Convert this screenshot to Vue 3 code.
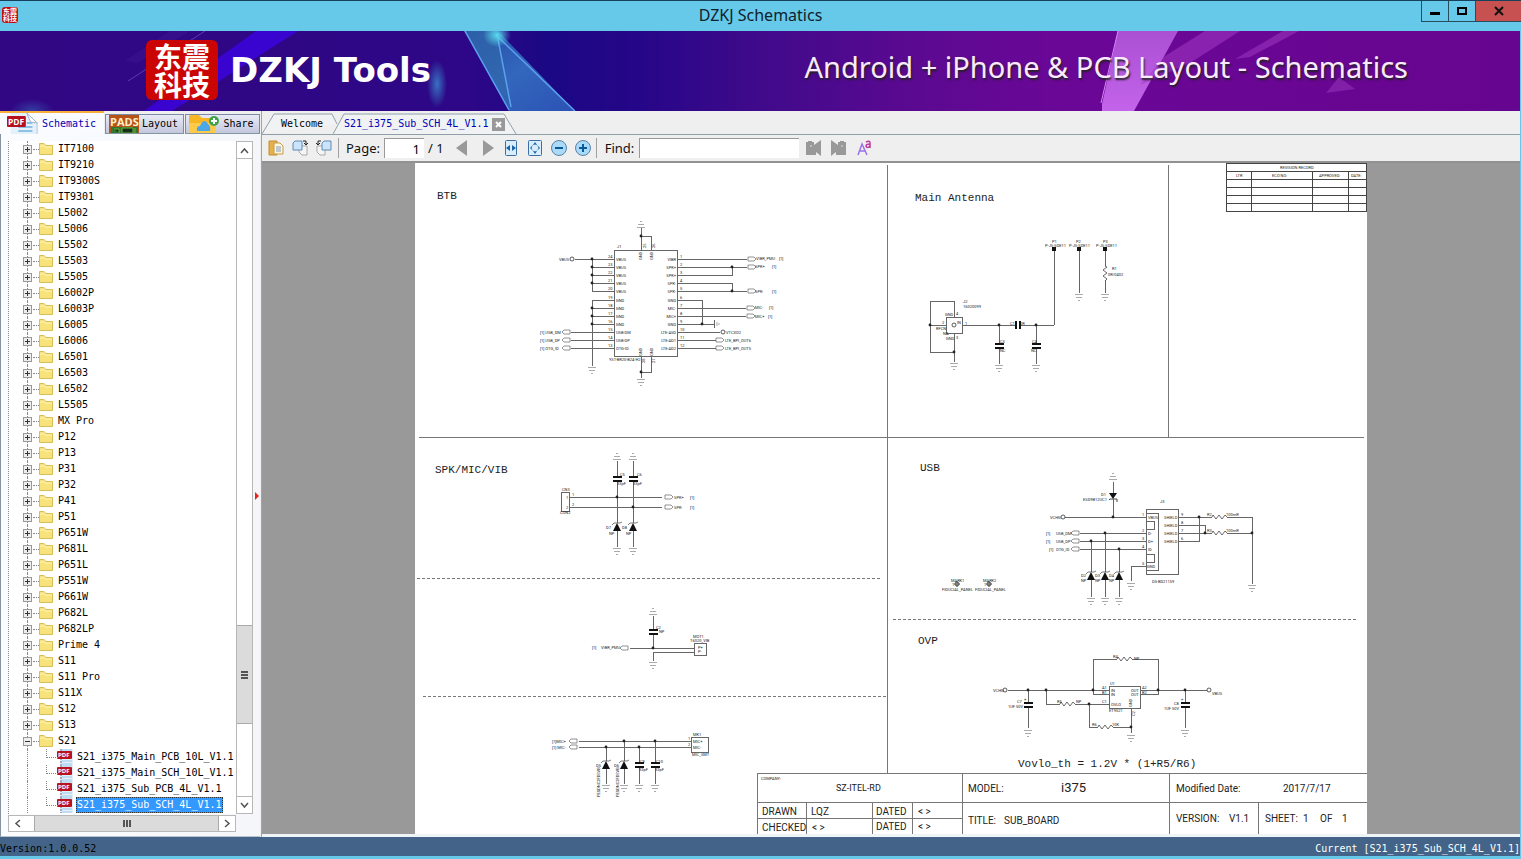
<script setup>
import { ref } from 'vue'

const folders = [
  'IT7100', 'IT9210', 'IT9300S', 'IT9301', 'L5002', 'L5006', 'L5502', 'L5503', 'L5505', 'L6002P', 'L6003P',
  'L6005', 'L6006', 'L6501', 'L6503', 'L6502', 'L5505', 'MX Pro', 'P12', 'P13', 'P31', 'P32', 'P41', 'P51',
  'P651W', 'P681L', 'P651L', 'P551W', 'P661W', 'P682L', 'P682LP', 'Prime 4', 'S11', 'S11 Pro', 'S11X', 'S12',
  'S13', 'S21',
]
const files = ['S21_i375_Main_PCB_10L_V1.1', 'S21_i375_Main_SCH_10L_V1.1', 'S21_i375_Sub_PCB_4L_V1.1', 'S21_i375_Sub_SCH_4L_V1.1']
const selected = ref(files[3])
const page = ref('1')
const find = ref('')

// Connector J1 pins
const pinY = [259, 267, 275, 283, 291, 300, 308, 316, 324, 332, 340, 348]
const leftPins = ['VBUS', 'VBUS', 'VBUS', 'VBUS', 'VBUS', 'GND', 'GND', 'GND', 'GND', 'USB-DM', 'USB-DP', 'OTG-ID']
const rightPins = ['VIBR', 'SPK+', 'SPK+', 'SPK-', 'SPK-', 'GND', 'MIC-', 'MIC+', 'GND', 'LTE-ASD', 'LTE-AD1', 'LTE-AD2']

const wires = [
  // J1
  'M575 259H614M592 259V291M592 267H614M592 275H614M592 283H614M592 291H614',
  'M592 300V366M592 300H614M592 308H614M592 316H614M592 324H614M571 332H614M571 340H614M571 348H614',
  'M677 259H747M677 267H747M677 275H732V267M677 283H732V291M677 291H747M677 300H702V324M677 324H714M714 320V328',
  'M677 308H746M677 316H746M677 332H720M677 340H716M677 348H716',
  'M641 228V250M641 236H651V250M641 356V378M641 372H651V356',
  // antenna
  'M1054 250V325M1079 250V293M1105 250V266M1105 280V293M954 317V301H930V352H954M930 325H946M954 333V362',
  'M962 325H1016M1020 325H1054M999 325V344M999 348V364M1036 325V344M1036 348V364',
  // speaker, vibrator, microphone
  'M569 497H662M569 507H662M617 461V477M617 481V523M617 531V547M633 461V477M633 481V523M633 531V547',
  'M653 616V630M653 634V648M630 648H694M694 652H653V661',
  'M579 741H691M579 747H691M606 747V761M606 769V784M624 741V761M624 769V784M639 747V763M639 767V784M655 741V763M655 767V784',
  // USB
  'M1113 482V493M1113 499V517M1065 517H1146M1080 533H1146M1080 541H1146M1080 549H1146M1105 533V572M1105 580V597M1091 541V572M1091 580V597M1119 549V572M1119 580V597M1146 566H1131V581',
  'M1178 517H1212M1178 525H1205V533M1178 533H1212M1178 541H1199V517M1227 517H1252V584M1227 533H1252',
  // over-voltage protection
  'M1008 690H1109M1028 690V703M1028 707V728M1046 690V704H1060M1075 704H1109M1089 704V727H1098M1113 727H1131',
  'M1109 694H1093V659H1117M1132 659H1158V694H1140M1140 690H1207M1185 690V703M1185 707V728M1131 708V733',
]
const boxes = [
  [614, 250, 63, 106], [946, 317, 16, 16], [561, 492, 8, 19], [694, 643, 12, 12], [691, 737, 17, 15],
  [1146, 509, 32, 65], [1146, 513, 12, 57], [1146, 521, 8, 8], [1146, 554, 8, 8], [1109, 686, 31, 22],
]
const dots = [
  [592, 259], [592, 267], [592, 275], [592, 283], [592, 308], [592, 316], [592, 324], [641, 236], [641, 372],
  [732, 267], [732, 291], [702, 324], [930, 325], [954, 352], [999, 325], [1036, 325], [617, 497], [633, 507],
  [653, 648], [606, 747], [624, 741], [639, 747], [655, 741], [1113, 517], [1105, 533], [1091, 541], [1119, 549],
  [1199, 517], [1205, 533], [1252, 533], [1028, 690], [1046, 690], [1093, 690], [1089, 704], [1131, 727],
  [1158, 690], [1185, 690],
]
const rings = [[572, 259], [723, 332], [954, 325], [1063, 517], [1005, 690], [1209, 690]]
const groundsDown = [
  [592, 366], [641, 378], [1079, 293], [1105, 293], [954, 362], [999, 364], [1036, 364], [617, 547], [633, 547],
  [653, 661], [606, 784], [624, 784], [639, 784], [655, 784], [1091, 597], [1105, 597], [1119, 597], [1131, 582],
  [1252, 584], [1028, 729], [1185, 729], [1131, 734],
]
const groundsUp = [[641, 228], [617, 460], [633, 460], [653, 615], [1113, 480]]
const caps = [[999, 344], [1036, 344], [617, 477], [633, 477], [653, 630], [639, 763], [655, 763], [1028, 703], [1185, 703]]
const diodes = [[617, 523], [633, 523], [606, 761], [624, 761], [1091, 572], [1105, 572], [1119, 572]]
const resistors = [[1212, 517], [1212, 533], [1060, 704], [1098, 727], [1117, 659]]
const portsRight = [[748, 259], [748, 267], [748, 291], [747, 308], [747, 316], [716, 340], [716, 348], [665, 497], [665, 507]]
const portsLeft = [[570, 332], [570, 340], [570, 348], [628, 648], [577, 741], [577, 747], [1079, 533], [1079, 541], [1079, 549]]
const notes = [
  ['VBUS', 559, 261], ['J1', 617, 248], ['YST-BR20-B24-H2', 609, 361],
  ['[1] USB_DM', 540, 334], ['[1] USB_DP', 540, 342], ['[1] OTG_ID', 540, 350],
  ['VIBR_PMU', 756, 260], ['[1]', 779, 260], ['SPK+', 755, 268], ['[1]', 772, 268], ['SPK-', 755, 293], ['[1]', 772, 293],
  ['MIC-', 755, 309], ['[1]', 769, 309], ['MIC+', 755, 318], ['[1]', 768, 318],
  ['VTCXO2', 726, 334], ['LTE_BPI_OUT6', 725, 342], ['LTE_BPI_OUT5', 725, 350],
  ['P1', 1052, 243], ['P-JS-SDE11', 1045, 247], ['P2', 1076, 243], ['P-JS-SDE11', 1069, 247], ['P3', 1103, 243], ['P-JS-SDE11', 1096, 247],
  ['R1', 1112, 270], ['0R/0402', 1108, 276], ['J2', 963, 303], ['16020099', 963, 308], ['GND', 945, 316], ['GND', 946, 340],
  ['4', 956, 315], ['3', 956, 339], ['2', 942, 324], ['RFCN', 936, 330], ['1', 965, 325], ['NA', 943, 335], ['IN', 957, 324],
  ['C1', 1010, 325], ['0R', 1020, 325], ['C3', 1000, 343], ['NC', 1000, 352], ['C4', 1032, 343], ['NC', 1031, 352],
  ['CN3', 562, 491], ['CON2', 560, 514], ['1', 572, 496], ['2', 572, 506], ['1', 566, 499], ['2', 566, 509],
  ['C5', 620, 476], ['33pF', 617, 485], ['C6', 637, 476], ['33pF', 633, 485], ['D7', 606, 529], ['NP', 609, 535], ['D8', 622, 529], ['NP', 626, 535],
  ['SPK+', 674, 499], ['[1]', 690, 499], ['SPK-', 674, 509], ['[1]', 690, 509],
  ['[1]', 592, 649], ['VIBR_PMU', 601, 649], ['C2', 656, 629], ['NP', 659, 633], ['MOT1', 693, 638], ['T6020_VIB', 690, 642], ['P+', 698, 649], ['P-', 698, 653],
  ['[1]MIC+', 552, 743], ['[1] MIC-', 552, 749], ['MK1', 693, 736], ['MIC+', 693, 743], ['MIC-', 693, 749], ['MIC_SMT', 692, 756],
  ['D5', 596, 767], ['D6', 614, 767], ['C9', 640, 763], ['33pF', 639, 771], ['C10', 656, 763], ['33pF', 655, 771], ['1', 688, 740], ['2', 688, 746],
  ['D1', 1101, 496], ['ESD9B12UC1', 1083, 501], ['VCHG', 1050, 519], ['[1]', 1046, 535], ['USB_DM', 1056, 535], ['[1]', 1046, 543], ['USB_DP', 1056, 543],
  ['[1]', 1049, 551], ['OTG_ID', 1056, 551], ['J3', 1160, 503], ['VBUS', 1148, 519], ['D-', 1148, 535], ['D+', 1148, 543], ['ID', 1148, 551], ['GND', 1147, 568],
  ['SHIELD', 1164, 519], ['SHIELD', 1164, 527], ['SHIELD', 1164, 535], ['SHIELD', 1164, 543], ['D5-BD21159', 1152, 583],
  ['1', 1142, 516], ['2', 1142, 532], ['3', 1142, 540], ['4', 1142, 548], ['5', 1142, 565], ['9', 1181, 516], ['8', 1181, 524], ['7', 1181, 532], ['6', 1181, 540],
  ['R2', 1207, 516], ['100mR', 1226, 516], ['R3', 1207, 532], ['100mR', 1226, 532],
  ['D2', 1081, 577], ['NP', 1081, 582], ['D3', 1095, 577], ['NP', 1095, 582], ['D4', 1109, 577], ['NP', 1109, 582],
  ['MARK1', 951, 582], ['1', 952, 586], ['FIDUCIAL_PANEL', 942, 591], ['MARK2', 983, 582], ['1', 984, 586], ['FIDUCIAL_PANEL', 975, 591],
  ['VCHG', 993, 692], ['C7', 1017, 703], ['1UF 50V', 1008, 708], ['+', 1024, 701], ['C8', 1174, 705], ['1UF 50V', 1164, 710], ['+', 1181, 701],
  ['R5', 1057, 703], ['NP', 1076, 703], ['R6', 1092, 726], ['10K', 1112, 726], ['R4', 1113, 658], ['NP', 1134, 660],
  ['U1', 1110, 685], ['IN', 1111, 692], ['IN', 1111, 696], ['OUT', 1131, 692], ['OUT', 1131, 696], ['OVLO', 1111, 706], ['ET9521', 1109, 712],
  ['A1', 1102, 689], ['B1', 1102, 694], ['C1', 1102, 703], ['A2', 1142, 689], ['B2', 1142, 694], ['VBUS', 1212, 695],
  ['COMPANY:', 761, 780], ['REVISION RECORD', 1280, 169], ['LTR', 1236, 177], ['ECO NO:', 1272, 177], ['APPROVED:', 1319, 177], ['DATE:', 1351, 177],
]
const upright = [['PESDNC2FD5VB', 600, 797], ['PESDNC2FD5VB', 619, 797], ['25', 646, 248], ['26', 655, 248], ['GND', 642, 260], ['GND', 653, 260], ['GND', 642, 356], ['GND', 653, 356], ['28', 645, 363], ['27', 655, 363], ['GND', 1132, 707], ['C2', 1135, 716]]
const headings = [['BTB', 437, 199], ['Main Antenna', 915, 201], ['SPK/MIC/VIB', 435, 473], ['USB', 920, 471], ['OVP', 918, 644], ['Vovlo_th = 1.2V * (1+R5/R6)', 1018, 767]]
const block = [
  ['MODEL:', 968, 792], ['Modified Date:', 1176, 792], ['2017/7/17', 1283, 792], ['DRAWN', 762, 815], ['LQZ', 811, 815],
  ['DATED', 876, 815], ['<  >', 918, 815], ['CHECKED', 762, 831], ['<  >', 812, 831], ['DATED', 876, 830], ['<  >', 918, 830],
  ['TITLE:', 968, 824], ['SUB_BOARD', 1004, 824], ['VERSION:', 1176, 822], ['V1.1', 1229, 822], ['SHEET:', 1265, 822],
  ['1', 1303, 822], ['OF', 1320, 822], ['1', 1342, 822],
]
</script>

<template>
  <div class="app">
    <header class="titlebar">
      <span class="app-icon"><span>东震</span><span>科技</span></span>
      <h1>DZKJ Schematics</h1>
      <div class="window-buttons">
        <button aria-label="Minimize"><svg width="12" height="12"><path d="M1 7H11V10H1Z" /></svg></button>
        <button aria-label="Maximize"><svg width="12" height="12"><path d="M1 2H11V10H1ZM3 4V8H9V4Z" fill-rule="evenodd" /></svg></button>
        <button class="close" aria-label="Close"><svg width="12" height="12"><path d="M2 2L10 10M10 2L2 10" stroke="#111" stroke-width="2" /></svg></button>
      </div>
    </header>

    <section class="banner">
      <svg class="banner-art" viewBox="0 0 1520 80" preserveAspectRatio="none" aria-hidden="true">
        <defs>
          <linearGradient id="sky">
            <stop offset="0" stop-color="#310783" /><stop offset=".31" stop-color="#2d0787" /><stop offset=".36" stop-color="#1b0883" />
            <stop offset=".42" stop-color="#250688" /><stop offset=".5" stop-color="#400a8b" /><stop offset=".6" stop-color="#5b0991" /><stop offset=".7" stop-color="#6b0797" />
            <stop offset="1" stop-color="#66058f" />
          </linearGradient>
          <linearGradient id="shard" x1="0" y1="0" x2="1" y2="1"><stop offset="0" stop-color="#254aa5" /><stop offset=".5" stop-color="#3267bc" /><stop offset="1" stop-color="#2c52b5" /></linearGradient>
          <linearGradient id="ray" x1="0" y1="0" x2="0" y2="1"><stop offset="0" stop-color="#ab4fd3" /><stop offset="1" stop-color="#c364eb" /></linearGradient>
          <radialGradient id="glow"><stop offset="0" stop-color="#3a8ccf" stop-opacity=".8" /><stop offset="1" stop-color="#3a8ccf" stop-opacity="0" /></radialGradient>
          <radialGradient id="spark"><stop offset="0" stop-color="#59d8ec" /><stop offset="1" stop-color="#59d8ec" stop-opacity="0" /></radialGradient>
        </defs>
        <rect width="1520" height="80" fill="url(#sky)" />
        <path d="M256 0H298L172 80H144Z" fill="#3c04dd" opacity=".85" />
        <path d="M205 0L128 50" stroke="#5a39bb" stroke-width="1" />
        <path d="M170 0L125 30L138 32L190 0Z" fill="#492096" opacity=".3" />
        <ellipse cx="437" cy="53" rx="10" ry="24" fill="url(#glow)" />
        <ellipse cx="32" cy="80" rx="22" ry="12" fill="url(#glow)" opacity=".5" />
        <path d="M464 0H498L575 80H509Z" fill="url(#shard)" />
        <path d="M464 0H496L511 76Z" fill="#3068aa" opacity=".7" />
        <path d="M465 0L509 79M497 3L511 76M496 4L575 80" fill="none" stroke="#5d9eed" stroke-width="1.5" />
        <ellipse cx="497" cy="4" rx="14" ry="12" fill="url(#spark)" />
        <path d="M1118 0H1178L1134 80H1102V73Z" fill="url(#ray)" />
        <path d="M1118 0L1101 72" stroke="#d58cf4" stroke-width="1" />
        <path d="M1205 0H1240L1190 32L1140 54L1165 25Z" fill="#a33bc5" opacity=".55" />
        <path d="M1283 0H1299L1250 26L1235 28Z" fill="#a33bc5" opacity=".5" />
        <path d="M1326 62L1339 46L1355 58Z" fill="#8c2bb4" opacity=".7" />
      </svg>
      <div class="brand">
        <div class="logo"><span>东震</span><span>科技</span></div>
        <strong>DZKJ Tools</strong>
      </div>
      <p>Android + iPhone &amp; PCB Layout - Schematics</p>
    </section>

    <main class="workspace">
      <aside class="sidebar">
        <nav class="side-tabs">
          <button class="side-tab active">
            <svg width="32" height="21" viewBox="0 0 34 21" preserveAspectRatio="none"><path d="M4 0H22L32 9V21H4Z" fill="#e4f0fa" /><path d="M21 0L32 10L25 9Z" fill="#fff" stroke="#9cb4c9" /><path d="M12 14H27M12 18H27M21 10H27" stroke="#8dc1e4" stroke-width="2" /><path d="M32 9V21" stroke="#b0c5d7" /><rect y="3" width="20" height="11" rx="1" fill="#b70f1c" /><text x="1" y="12" font-size="9" font-weight="bold" fill="#fff">PDF</text></svg>
            Schematic
          </button>
          <button class="side-tab">
            <svg width="30" height="18" viewBox="0 0 30 18"><path d="M0 0H30V18H0Z" fill="#b65417" /><path d="M2 12H29V18H2Z" fill="#32752c" /><path d="M5 14H10V18M13 13H24V18H13ZM26 13V18" fill="#172e1a" stroke="#69b43c" /><text x="1" y="11" font-size="11" font-weight="bold" fill="#fff0ce">PADS</text></svg>
            Layout
          </button>
          <button class="side-tab">
            <svg width="31" height="18" viewBox="0 0 31 18"><path d="M0 1Q0 0 2 0H10L13 3H27V18H0Z" fill="#f8b722" /><path d="M0 8H27V18H0Z" fill="#ffc94a" /><path d="M8 16Q7 11 11 11Q15 2 19 9Q22 11 21 16Z" fill="#4aa8e8" /><circle cx="25" cy="6" r="5" fill="#3ca549" /><path d="M25 3V9M22 6H28" stroke="#fff" stroke-width="2" /></svg>
            Share
          </button>
        </nav>
        <div class="tree-panel">
          <div class="tree-row">
            <ul class="tree">
              <li v-for="(f, i) in folders" :key="i">
                <button class="expander" :aria-label="'Toggle ' + f">
                  <svg width="9" height="9"><rect x=".5" y=".5" width="8" height="8" fill="#eee" stroke="#999" /><path :d="f === 'S21' ? 'M2 4.5H7' : 'M2 4.5H7M4.5 2V7'" stroke="#333" /></svg>
                </button>
                <svg class="folder" width="14" height="13"><path d="M.5 .5H5L6.500 2.500H13.500V11.500H.5Z" fill="#f7e27c" stroke="#d9bd55" /><path d="M1 3H6L7 4H13" fill="none" stroke="#fff5b5" /></svg>
                <span>{{ f }}</span>
              </li>
              <li v-for="f in files" :key="f" class="file">
                <svg width="16" height="16"><path d="M3 0H16V16H3Z" fill="#e2effa" /><path d="M5 12H15M5 15H15M5 1H15" stroke="#9cc8e8" /><path d="M4 0V16" stroke="#668" stroke-dasharray="2 1" /><rect y="2" width="15" height="8" rx="1" fill="#b8131f" /><text x="1" y="8" font-size="6" font-weight="bold" fill="#fff">PDF</text></svg>
                <button class="label" :class="{ selected: f === selected }" @click="selected = f">{{ f }}</button>
              </li>
            </ul>
            <div class="vscroll">
              <button aria-label="Scroll up"><svg width="9" height="7"><path d="M1 6L4.500 2L8 6" /></svg></button>
              <div class="vtrack"><span class="vthumb"><i></i></span></div>
              <button aria-label="Scroll down"><svg width="9" height="7"><path d="M1 1L4.500 5L8 1" /></svg></button>
            </div>
          </div>
          <div class="hscroll">
            <button aria-label="Scroll left"><svg width="7" height="9"><path d="M6 1L2 4.500L6 8" /></svg></button>
            <span class="hthumb"><i></i></span>
            <button aria-label="Scroll right"><svg width="7" height="9"><path d="M1 1L5 4.500L1 8" /></svg></button>
          </div>
          <span class="splitter-mark"></span>
        </div>
      </aside>

      <section class="viewer">
        <nav class="doc-tabs">
          <button class="doc-tab welcome">
            <svg width="76" height="24"><path d="M0 23L12 3H70L75 13" /></svg>
            <span>Welcome</span>
          </button>
          <div class="doc-tab current">
            <svg width="184" height="24"><path d="M0 23L11 3H171L183 23" /></svg>
            <span>S21_i375_Sub_SCH_4L_V1.1</span>
            <button class="tab-close" aria-label="Close tab"><svg width="13" height="13"><path d="M4 4L9 9M9 4L4 9" stroke="#fff" stroke-width="2" /></svg></button>
          </div>
        </nav>

        <div class="toolbar">
          <button aria-label="Open"><svg width="16" height="16"><path d="M1 1H9V15H1Z" fill="#e4b14c" stroke="#c48b2c" /><path d="M6 3H12L15 6V14H6Z" fill="#fff6db" stroke="#c79b45" /><path d="M8 7H13M8 9H13M8 11H13" stroke="#7b9cc5" /></svg></button>
          <button aria-label="Rotate right"><svg width="16" height="16"><path d="M7 6H15V15H10L7 12Z" fill="#f5f5f5" stroke="#aaa" /><path d="M3 1H10V10H1V3Z" fill="#cbe4fa" stroke="#5e8bb7" /><path d="M11 1H14V4M12 3L14 5L16 3" fill="none" stroke="#222" /></svg></button>
          <button aria-label="Rotate left"><svg width="16" height="16"><path d="M1 6H9V15H4L1 12Z" fill="#f5f5f5" stroke="#aaa" /><path d="M8 1H15V10H6V3Z" fill="#cbe4fa" stroke="#5e8bb7" /><path d="M5 1H2V4M0 3L2 5L4 3" fill="none" stroke="#222" /></svg></button>
          <i class="sep"></i>
          <label for="page">Page:</label>
          <input id="page" v-model="page" class="page-box" type="text">
          <span class="total">/ 1</span>
          <button class="prev" aria-label="Previous page"><svg width="12" height="16"><path d="M0 8L11 0V16Z" fill="#999" /></svg></button>
          <button class="next" aria-label="Next page"><svg width="12" height="16"><path d="M11 8L0 0V16Z" fill="#999" /></svg></button>
          <button aria-label="Fit width"><svg width="16" height="16"><rect x="2.500" y=".5" width="11" height="15" rx="1" fill="#d9edfc" stroke="#3a6ea5" /><path d="M3 8L7 5V11ZM13 8L9 5V11Z" fill="#1765ab" /></svg></button>
          <button aria-label="Fit page"><svg width="16" height="16"><rect x="1.500" y=".5" width="13" height="15" rx="1" fill="#d9edfc" stroke="#3a6ea5" /><path d="M8 2L10 5H6ZM8 14L10 11H6ZM3 8L5 6V10ZM13 8L11 6V10Z" fill="#1765ab" /><circle cx="8" cy="8" r="3.500" fill="none" stroke="#7ba7d0" stroke-dasharray="2 1" /></svg></button>
          <button aria-label="Zoom out"><svg width="16" height="16"><circle cx="8" cy="8" r="7.500" fill="#a9daf7" stroke="#5683a9" /><path d="M4 8H12" stroke="#0b5a98" stroke-width="2" /></svg></button>
          <button aria-label="Zoom in"><svg width="16" height="16"><circle cx="8" cy="8" r="7.500" fill="#a9daf7" stroke="#5683a9" /><path d="M4 8H12M8 4V12" stroke="#0b5a98" stroke-width="2" /></svg></button>
          <i class="sep tight"></i>
          <label for="find">Find:</label>
          <input id="find" v-model="find" class="find-box" type="text">
          <button class="search" aria-label="Find previous"><svg width="16" height="16"><path d="M0 2H2V1H6V2H8V5L15 0V16L10 12V15H0Z" fill="#999" /><path d="M4 6H6" stroke="#ddd" /></svg></button>
          <button class="search" aria-label="Find next"><svg width="16" height="16"><path d="M0 0L7 5V2H9V1H13V2H15V15H5V12L0 16Z" fill="#999" /><path d="M10 6H12" stroke="#ddd" /></svg></button>
          <button aria-label="Match case"><svg width="16" height="16"><path d="M1 15L5 4L10 15M3 11H8" fill="none" stroke="#9a73ea" stroke-width="1.500" /><path d="M9 2Q13 0 13 3V8M13 4Q9 4 9 6Q10 9 13 6" fill="none" stroke="#c23a9d" stroke-width="1.500" /></svg></button>
        </div>

        <div class="document">
          <svg class="sheet" width="952" height="671" viewBox="415 163 952 671" role="img" aria-label="SUB_BOARD schematic, i375">
            <defs>
              <g id="gnd"><path d="M-4 1H4M-3 4H3M-1 7H1" stroke="#aaa" shape-rendering="crispEdges" /></g>
              <g id="cap"><path d="M-4 0H5M-4 4H5" stroke="#111" stroke-width="2" /></g>
              <g id="diode"><path d="M0 0L4 8H-4Z" fill="#111" /><path d="M-5 2L-3 0H3L5 -1" fill="none" stroke="#444" stroke-width=".7" /></g>
              <path id="res" d="M0 0L1 -2L4 2L7 -2L10 2L13 -2L15 0" fill="none" stroke="#444" stroke-width=".8" />
              <path id="port" d="M0 -2H6L8 0L6 2H0Z" fill="#fff" stroke="#777" stroke-width=".8" />
            </defs>
            <g class="frame">
              <path d="M887 165V773M1168 165V437M419 437H1364M757 773H1367M757 802H1367M757 818H962M757 773V834M806 802V834M872 802V834M912 802V834M962 773V834M1169 773V834M1258 802V834" />
              <path d="M417 578H881M423 696H886M893 619H1358" stroke-dasharray="3 2" />
              <path class="dark" d="M1226 163V211M1366 163V211M1226 163H1367M1226 171H1367M1226 179H1367M1226 187H1367M1226 195H1367M1226 203H1367M1226 211H1367M1251 171V211M1312 171V211M1348 171V211" />
            </g>
            <g class="wires">
              <path v-for="w in wires" :key="w" :d="w" />
              <rect v-for="(b, i) in boxes" :key="'b' + i" :x="b[0]" :y="b[1]" :width="b[2]" :height="b[3]" />
            </g>
            <use v-for="(p, i) in groundsDown" :key="'gd' + i" href="#gnd" :transform="`translate(${p[0]} ${p[1]})`" />
            <use v-for="(p, i) in groundsUp" :key="'gu' + i" href="#gnd" :transform="`translate(${p[0]} ${p[1]}) scale(1 -1)`" />
            <use v-for="(p, i) in caps" :key="'c' + i" href="#cap" :x="p[0]" :y="p[1]" />
            <path d="M1016 321V329M1020 321V329" stroke="#111" stroke-width="2" />
            <use v-for="(p, i) in diodes" :key="'d' + i" href="#diode" :x="p[0]" :y="p[1]" />
            <path d="M1109 493H1117L1113 499Z" fill="#111" /><path d="M1109 500L1110 499H1117V502" fill="none" stroke="#444" />
            <use v-for="(p, i) in resistors" :key="'r' + i" href="#res" :x="p[0]" :y="p[1]" />
            <use href="#res" transform="translate(1105 266) rotate(90)" />
            <use v-for="(p, i) in portsRight" :key="'pr' + i" href="#port" :x="p[0]" :y="p[1]" />
            <use v-for="(p, i) in portsLeft" :key="'pl' + i" href="#port" :transform="`translate(${p[0]} ${p[1]}) rotate(180)`" />
            <circle v-for="(p, i) in dots" :key="'o' + i" :cx="p[0]" :cy="p[1]" r="1.400" fill="#222" />
            <circle v-for="(p, i) in rings" :key="'q' + i" :cx="p[0]" :cy="p[1]" r="2" fill="#fff" stroke="#333" stroke-width=".8" />
            <path d="M1052 247H1056V251H1052ZM1077 247H1081V251H1077ZM1103 247H1107V251H1103Z" fill="#111" />
            <path d="M717 322V326M719 323V325" stroke="#aaa" />
            <g fill="none" stroke="#333" stroke-width=".8"><circle cx="957" cy="584" r="2" /><path d="M954 584H960M957 581V587M986 584H992M989 581V587" /><circle cx="989" cy="584" r="2" /></g>
            <g class="notes">
              <template v-for="(y, i) in pinY" :key="y">
                <text x="616" :y="y + 2">{{ leftPins[i] }}</text>
                <text x="608" :y="y - 1">{{ 24 - i }}</text>
                <text x="676" :y="y + 2" text-anchor="end">{{ rightPins[i] }}</text>
                <text x="680" :y="y - 1">{{ i + 1 }}</text>
              </template>
              <text v-for="(t, i) in notes" :key="i" :x="t[1]" :y="t[2]">{{ t[0] }}</text>
              <text v-for="(t, i) in upright" :key="'u' + i" :transform="`translate(${t[1]} ${t[2]}) rotate(-90)`">{{ t[0] }}</text>
            </g>
            <g class="headings"><text v-for="t in headings" :key="t[0]" :x="t[1]" :y="t[2]">{{ t[0] }}</text></g>
            <g class="block">
              <text v-for="(t, i) in block" :key="i" :x="t[1]" :y="t[2]">{{ t[0] }}</text>
              <text class="company" x="836" y="791">SZ-ITEL-RD</text>
              <text class="model" x="1061" y="792">i375</text>
            </g>
          </svg>
        </div>
      </section>
    </main>

    <footer class="status"><span>Version:1.0.0.52</span><span class="now">Current [S21_i375_Sub_SCH_4L_V1.1]</span></footer>
  </div>
</template>

<style>
body { margin: 0; }
</style>

<style scoped>
* { box-sizing: border-box; }
.app { height: 100vh; display: flex; flex-direction: column; overflow: hidden; background: #66c9ea; font: 10px/16px "DejaVu Sans Mono", "Liberation Mono", monospace; color: #000; }
button { margin: 0; padding: 0; border: 0; background: none; font: inherit; color: inherit; display: flex; align-items: center; justify-content: center; }
svg { display: block; flex: none; }
.titlebar { height: 31px; flex: none; border-top: 1px solid #17405c; position: relative; display: flex; align-items: center; justify-content: center; padding-bottom: 2px; }
.titlebar h1 { margin: 0; font: 16px/28px "Noto Sans", sans-serif; color: #10222c; }
.app-icon { position: absolute; left: 2px; top: 6px; width: 16px; height: 16px; border-radius: 3px; background: #c40d10; color: #fff; font: bold 7px/7px "Noto Sans CJK SC", sans-serif; display: flex; flex-direction: column; align-items: center; justify-content: center; }
.window-buttons { position: absolute; right: 0; top: 0; display: flex; height: 21px; border: 1px solid #274c5c; border-width: 0 0 1px 1px; }
.window-buttons button { width: 27px; border-right: 1px solid #274c5c; }
.window-buttons .close { width: 45px; border-right: 0; background: #c75050; }
.banner { height: 80px; flex: none; position: relative; display: flex; align-items: center; justify-content: space-between; margin-right: 1px; padding: 0 112px 0 146px; color: #fff; }
.banner-art { position: absolute; inset: 0; width: 100%; height: 100%; }
.brand { position: relative; display: flex; align-items: center; gap: 12px; margin-bottom: 2px; }
.brand strong { font: bold 34px/40px "DejaVu Sans", sans-serif; }
.logo { width: 72px; height: 60px; border-radius: 6px; background: #cb0404; font: bold 28px/28px "Noto Sans CJK SC", sans-serif; display: flex; flex-direction: column; align-items: center; justify-content: center; }
.logo span { display: block; height: 28px; }
.banner p { position: relative; margin: 0 0 8px; font: 29px/36px "Noto Sans", sans-serif; text-shadow: 1px 2px 2px #222; color: #fbeaff; white-space: nowrap; }
.workspace { flex: 1; min-height: 0; display: flex; margin-right: 1px; background: #efefef; }
.sidebar { width: 261px; flex: none; display: flex; flex-direction: column; }
.side-tabs { height: 23px; flex: none; display: flex; align-items: flex-end; gap: 1px; }
.side-tab { height: 20px; gap: 3px; padding: 0 4px 0 2px; border: 1px solid #7c8aa8; border-bottom-color: #8296a4; background: linear-gradient(#e8eaf5, #c3c7dd); font-size: 10px; overflow: hidden; }
.side-tab svg { font-family: "Open Sans", sans-serif; }
.side-tab.active { height: 23px; width: 104px; padding: 0 8px 0 7px; border: 0; border-top: 2px solid #f7ae3c; background: #f9fbff; color: #0000b8; }
.side-tab:nth-child(2) { width: 79px; }
.side-tab:nth-child(3) { width: 75px; }
.tree-panel { flex: 1; min-height: 0; position: relative; display: flex; flex-direction: column; margin-right: 1px; padding: 7px 7px 4px 7px; border-left: 1px solid #8593a1; background: linear-gradient(90deg, #fafcff, #f4f6fa); border-bottom: 1px solid #b9c4cf; }
.tree-row { flex: 1; min-height: 0; display: flex; }
.tree { flex: 1; min-width: 0; margin: 0; padding: 0; list-style: none; overflow: hidden; background: #fff; border-left: 1px dotted #888; }
.tree li { height: 16px; position: relative; display: flex; align-items: center; padding-left: 14px; white-space: pre; }
.tree li::before { content: ""; position: absolute; left: 18px; top: 0; height: 16px; border-left: 1px dotted #888; }
.expander { position: relative; width: 9px; height: 9px; margin-right: 7px; }
.expander::after { content: ""; position: absolute; left: 10px; top: 4px; width: 6px; border-top: 1px dotted #888; }
.folder { margin-right: 5px; }
.tree li.file { padding-left: 48px; }
.tree li.file::after { content: ""; position: absolute; left: 37px; top: 0; width: 11px; height: 8px; border: 1px dotted #888; border-width: 0 0 1px 1px; }
.file svg { margin-right: 3px; font-family: "Open Sans", sans-serif; }
.file .label { height: 16px; padding: 0 1px; white-space: nowrap; }
.label.selected { background: #3399ff; color: #fff; outline: 1px dotted #333; outline-offset: -1px; }
.vscroll { width: 17px; flex: none; display: flex; flex-direction: column; border: 1px solid #b7b7b7; background: #fff; }
.vscroll button { height: 16px; flex: none; }
.vscroll path, .hscroll path { fill: none; stroke: #555; stroke-width: 1.500; }
.vtrack { flex: 1; display: flex; flex-direction: column; justify-content: flex-end; border: 1px solid #b7b7b7; border-width: 1px 0; padding-bottom: 72px; }
.vthumb, .hthumb { background: #dbdbdb; border: 1px solid #aaa; display: flex; align-items: center; justify-content: center; }
.vthumb { height: 99px; border-width: 1px 0; }
.vthumb i { width: 7px; height: 8px; background: repeating-linear-gradient(#555 0 2px, transparent 2px 3px); }
.hscroll { height: 17px; margin: 1px 17px 0 0; display: flex; border: 1px solid #b7b7b7; background: #fff; }
.hscroll button { width: 16px; }
.hthumb { flex: 1; margin-left: 9px; border-width: 0 1px; }
.hthumb i { height: 7px; width: 8px; background: repeating-linear-gradient(90deg, #555 0 2px, transparent 2px 3px); }
.splitter-mark { position: absolute; right: 1px; top: 51%; border: 4px solid transparent; border-left: 4px solid #e1261c; border-right: 0; }
.viewer { flex: 1; min-width: 0; display: flex; flex-direction: column; border-left: 1px solid #9aa5ae; }
.doc-tabs { height: 24px; flex: none; display: flex; border-bottom: 1px solid #8fa0a9; }
.doc-tab { position: relative; height: 24px; flex: none; display: flex; align-items: center; padding-top: 2px; }
.doc-tab > svg { position: absolute; left: 0; top: 0; }
.doc-tab > svg path { fill: #f1f2f3; stroke: #8fa0a9; }
.doc-tab span { position: relative; }
.welcome { width: 71px; justify-content: flex-start; padding-left: 19px; }
.current { width: 184px; padding-left: 11px; color: #0000b8; gap: 3px; }
.tab-close { position: relative; width: 13px; height: 13px; background: #999; }
.toolbar { height: 28px; flex: none; display: flex; align-items: center; gap: 8px; padding-left: 6px; border-bottom: 2px solid #929292; font: 13px/18px "Noto Sans", sans-serif; color: #111; }
.sep { width: 1px; height: 20px; background: #a0a0a0; margin: 0 -1px 0 -2px; }
.sep.tight { margin: 0 0 0 -3px; }
.toolbar input { height: 20px; border: 1px solid #999; border-width: 1px 0 0 1px; border-radius: 0; background: #fff; font: inherit; padding: 0 4px; outline: 0; }
.page-box { width: 40px; margin-left: -4px; text-align: right; }
.total { margin-left: -4px; }
.prev { margin-left: 4px; }
.next { margin-left: 7px; }
.find-box { width: 160px; margin-left: -3px; }
.toolbar .search { margin: 0 2px 0 -1px; }
.document { flex: 1; min-height: 0; overflow: hidden; display: flex; justify-content: center; background: #999; border-bottom: 3px solid #f1f4f6; }
.sheet { background: #fff; }
.frame path, .wires path, .wires rect { fill: none; stroke: #777; shape-rendering: crispEdges; }
.wires path, .wires rect { stroke: #666; }
.frame .dark { stroke: #444; }
.notes { font: 4px Roboto, sans-serif; fill: #222; }
.headings { font: 11px "Liberation Mono", monospace; fill: #222; white-space: pre; }
.block { font: 10px Roboto, sans-serif; fill: #222; white-space: pre; }
.company { font-size: 9px; }
.model { font-size: 13px; }
.status { height: 22px; flex: none; display: flex; align-items: center; justify-content: space-between; margin-right: 1px; padding-top: 5px; background: #436488; border-bottom: 3px solid #66c9ea; white-space: pre; }
.now { color: #fff; }
</style>
